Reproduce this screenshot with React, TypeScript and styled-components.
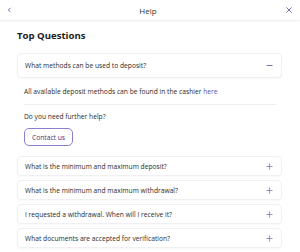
import React from 'react';
import styled, { createGlobalStyle } from 'styled-components';

const GlobalStyle = createGlobalStyle`
  body {
    margin: 0;
    background: #ffffff;
    font-family: "Open Sans", "Noto Sans", sans-serif;
    color: #2b2b2b;
  }
  * { box-sizing: border-box; }
`;

const Page = styled.div`
  width: 300px;
  height: 252px;
  overflow: hidden;
  background: #fff;
`;

const Header = styled.header`
  height: 21px;
  display: grid;
  grid-template-columns: 18px 1fr 22px;
  align-items: center;
  border-bottom: 1px solid #f1f1f4;
  box-shadow: 0 1px 2px rgba(0, 0, 0, 0.03);
`;

const HeaderTitle = styled.div`
  text-align: center;
  font-size: 8px;
  color: #333;
`;

const IconButton = styled.div`
  display: flex;
  align-items: center;
  justify-content: center;
  color: #6b62b8;
`;

const Content = styled.main`
  padding: 8px 18px 0 17px;
`;

const Title = styled.h2`
  margin: 0 0 10px 0;
  font-size: 9.6px;
  font-weight: 700;
  color: #222;
  line-height: 14px;
`;

const Card = styled.div<{ $open?: boolean }>`
  border: 1px solid #f0f0f3;
  border-radius: 4px;
  box-shadow: 0 1px 2px rgba(0, 0, 0, 0.03);
  height: ${(p) => (p.$open ? '25px' : '20px')};
  padding: 0 8px 0 7px;
  display: flex;
  align-items: center;
  justify-content: space-between;
  margin-bottom: 4px;
`;

const Question = styled.span`
  font-size: 6.7px;
  color: #2b2b2b;
`;

const Answer = styled.div`
  padding: 5px 6px 0 7px;
`;

const AnswerText = styled.p`
  margin: 0;
  font-size: 6.7px;
  line-height: 9px;
  padding-bottom: 8px;
  border-bottom: 1px solid #eeeeee;
`;

const Link = styled.a`
  color: #5a4fb0;
  text-decoration: none;
`;

const HelpText = styled.p`
  margin: 7px 0 7px 0;
  font-size: 6.7px;
  line-height: 9px;
`;

const ContactButton = styled.button`
  display: block;
  font-family: inherit;
  font-size: 6.7px;
  color: #3f3a7a;
  background: #fff;
  border: 1px solid #8b80cf;
  border-radius: 5px;
  width: 49px;
  height: 18px;
  padding: 0;
  margin-bottom: 10px;
`;

const Chevron = () => (
  <svg width="5" height="6" viewBox="0 0 5 6">
    <path d="M3.5 0.8 L1.4 3 L3.5 5.2" fill="none" stroke="currentColor" strokeWidth="0.9" />
  </svg>
);

const Close = () => (
  <svg width="6" height="6" viewBox="0 0 6 6">
    <path d="M0.4 0.4 L5.6 5.6 M5.6 0.4 L0.4 5.6" fill="none" stroke="currentColor" strokeWidth="0.9" />
  </svg>
);

const Minus = () => (
  <svg width="7" height="7" viewBox="0 0 7 7">
    <path d="M0.5 3.5 H6.5" stroke="#7d74c4" strokeWidth="1" />
  </svg>
);

const Plus = () => (
  <svg width="7" height="7" viewBox="0 0 7 7">
    <path d="M0.5 3.5 H6.5 M3.5 0.5 V6.5" stroke="#7d74c4" strokeWidth="0.8" />
  </svg>
);

const questions = [
  'What is the minimum and maximum deposit?',
  'What is the minimum and maximum withdrawal?',
  'I requested a withdrawal. When will I receive it?',
  'What documents are accepted for verification?',
];

export default function App() {
  return (
    <Page>
      <GlobalStyle />
      <Header>
        <IconButton><Chevron /></IconButton>
        <HeaderTitle>Help</HeaderTitle>
        <IconButton><Close /></IconButton>
      </Header>
      <Content>
        <Title>Top Questions</Title>
        <Card $open>
          <Question>What methods can be used to deposit?</Question>
          <Minus />
        </Card>
        <Answer>
          <AnswerText>
            All available deposit methods can be found in the cashier <Link href="#">here</Link>
          </AnswerText>
          <HelpText>Do you need further help?</HelpText>
          <ContactButton>Contact us</ContactButton>
        </Answer>
        {questions.map((q) => (
          <Card key={q}>
            <Question>{q}</Question>
            <Plus />
          </Card>
        ))}
      </Content>
    </Page>
  );
}
